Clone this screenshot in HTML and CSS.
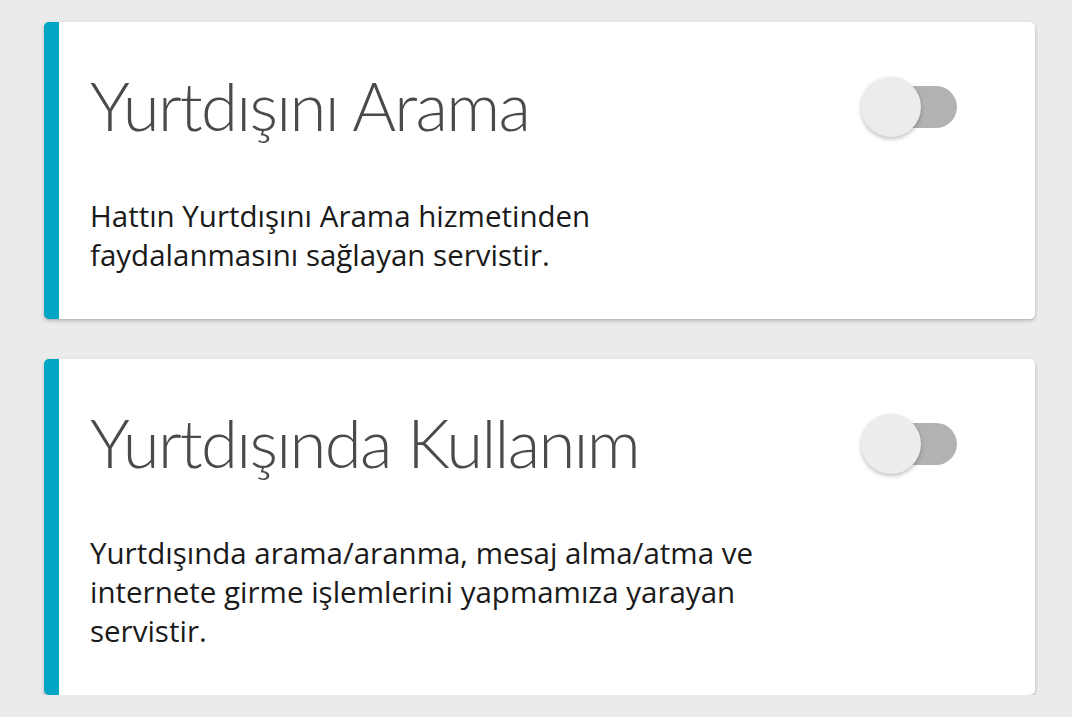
FILE: index.html
```html
<!DOCTYPE html>
<html lang="tr">
<head>
<meta charset="utf-8">
<link rel="stylesheet" href="styles.css">
</head>
<body>
<main class="list">
  <section class="card">
    <div class="card-head">
      <h2 class="title">Yurtdışını Arama</h2>
      <div class="toggle"><span class="track"></span><span class="knob"></span></div>
    </div>
    <p class="desc">Hattın Yurtdışını Arama hizmetinden<br>faydalanmasını sağlayan servistir.</p>
  </section>
  <section class="card">
    <div class="card-head">
      <h2 class="title">Yurtdışında Kullanım</h2>
      <div class="toggle"><span class="track"></span><span class="knob"></span></div>
    </div>
    <p class="desc">Yurtdışında arama/aranma, mesaj alma/atma ve<br>internete girme işlemlerini yapmamıza yarayan<br>servistir.</p>
  </section>
</main>
</body>
</html>
```
FILE: styles.css
```css
html, body {
  margin: 0;
  padding: 0;
  background: #ebebeb;
}
.list {
  display: flex;
  flex-direction: column;
  gap: 40px;
  padding: 22px 37px 0 44px;
}
.card {
  background: #fff;
  border-left: 15px solid #00a7c4;
  border-radius: 5px;
  box-shadow: 0 2px 4px rgba(0,0,0,0.18), 0 1px 2px rgba(0,0,0,0.1);
  padding: 47px 78px 45px 31px;
}
.card-head {
  display: flex;
  align-items: center;
  justify-content: space-between;
}
.title {
  margin: 0;
  font-family: Lato, "Open Sans", sans-serif;
  font-weight: 300;
  font-size: 67px;
  line-height: 72px;
  letter-spacing: -1.7px;
  color: #4a4a4a;
}
.toggle {
  position: relative;
  width: 96px;
  height: 60px;
  margin-top: 4px;
}
.track {
  position: absolute;
  right: 0;
  top: 9px;
  width: 76px;
  height: 42px;
  border-radius: 21px;
  background: #b2b2b2;
}
.knob {
  position: absolute;
  left: 0;
  top: 0;
  width: 60px;
  height: 60px;
  border-radius: 50%;
  background: #ececec;
  box-shadow: 0 2px 4px rgba(0,0,0,0.25);
}
.desc {
  margin: 55px 0 0;
  font-family: "Open Sans", sans-serif;
  font-size: 29.5px;
  line-height: 39px;
  color: #1a1a1a;
}
```
